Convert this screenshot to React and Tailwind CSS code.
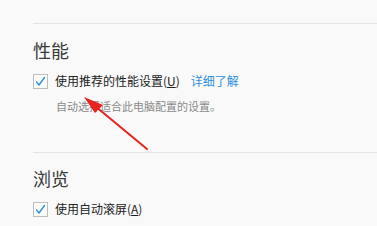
import React from "react";

function Check() {
  return (
    <span className="flex h-[15px] w-[15px] shrink-0 items-center justify-center border border-[#bdbdbd] bg-white">
      <svg width="11" height="11" viewBox="0 0 11 11" fill="none">
        <path d="M1.5 6 L4 9 L9.5 1.5" stroke="#2b8fd6" strokeWidth="1.4" strokeLinecap="round" strokeLinejoin="round" />
      </svg>
    </span>
  );
}

export default function App() {
  return (
    <div
      className="relative h-[226px] w-[377px] overflow-hidden bg-[#f9f9f9] text-[#333]"
      style={{ fontFamily: '"Noto Sans CJK SC", "Noto Sans", sans-serif' }}
    >
      <div className="pl-[33px] pt-[23px]">
        <div className="h-px w-full bg-[#e4e4e4]" />
        <div className="mt-[17px] text-[18px] leading-[18px] text-[#3a3a3a]">性能</div>
        <div className="mt-[14px] flex items-center">
          <Check />
          <span className="ml-[7px] text-[12px] leading-[16px] text-[#222]">
            使用推荐的性能设置(<span className="underline">U</span>)
          </span>
          <span className="ml-[11px] text-[12px] leading-[16px] text-[#2f8fe0]">详细了解</span>
        </div>
        <div className="ml-[23px] mt-[10px] text-[11px] leading-[14px] text-[#8a8a8a]">
          自动选择适合此电脑配置的设置。
        </div>
        <div className="mt-[39px] h-px w-full bg-[#e4e4e4]" />
        <div className="mt-[16px] text-[18px] leading-[18px] text-[#3a3a3a]">浏览</div>
        <div className="mt-[14px] flex items-center">
          <Check />
          <span className="ml-[7px] text-[12px] leading-[16px] text-[#222]">
            使用自动滚屏(<span className="underline">A</span>)
          </span>
        </div>
      </div>
      <svg className="absolute left-0 top-0" width="377" height="226" viewBox="0 0 377 226">
        <line x1="147" y1="149" x2="95" y2="106" stroke="#e8231f" strokeWidth="2" strokeLinecap="round" />
        <polygon points="84,97 103,105 95,113" fill="#e8231f" />
      </svg>
    </div>
  );
}
